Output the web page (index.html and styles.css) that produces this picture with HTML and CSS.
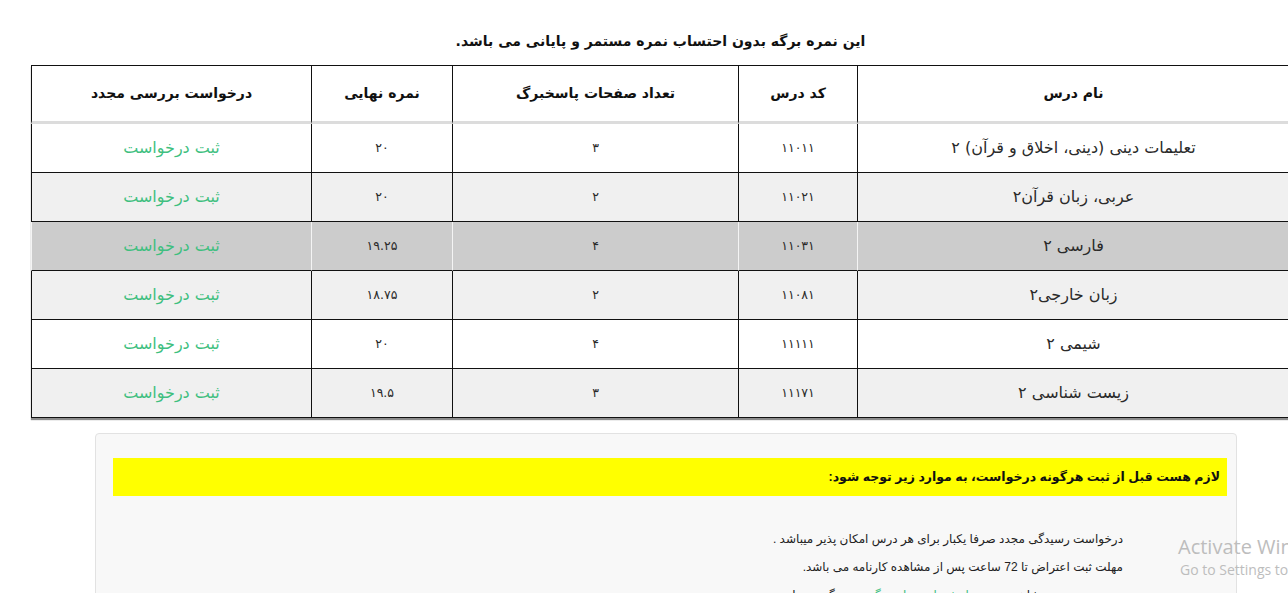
FILE: index.html
```html
<!DOCTYPE html>
<html lang="fa" dir="rtl">
<head>
<meta charset="utf-8">
<title>کارنامه</title>
<link rel="stylesheet" href="styles.css">
</head>
<body>
<div class="page">
  <div class="report">
    <h1 class="caption">این نمره برگه بدون احتساب نمره مستمر و پایانی می باشد.</h1>
    <table class="grades">
      <thead>
        <tr>
          <th class="c-name">نام درس</th>
          <th class="c-code">کد درس</th>
          <th class="c-pages">تعداد صفحات پاسخبرگ</th>
          <th class="c-grade">نمره نهایی</th>
          <th class="c-req">درخواست بررسی مجدد</th>
        </tr>
      </thead>
      <tbody>
        <tr>
          <td class="name">تعلیمات دینی (دینی، اخلاق و قرآن) ۲</td>
          <td class="num">۱۱۰۱۱</td>
          <td class="num">۳</td>
          <td class="num">۲۰</td>
          <td><a class="req" href="#">ثبت درخواست</a></td>
        </tr>
        <tr class="alt">
          <td class="name">عربی، زبان قرآن۲</td>
          <td class="num">۱۱۰۲۱</td>
          <td class="num">۲</td>
          <td class="num">۲۰</td>
          <td><a class="req" href="#">ثبت درخواست</a></td>
        </tr>
        <tr class="hover">
          <td class="name">فارسی ۲</td>
          <td class="num">۱۱۰۳۱</td>
          <td class="num">۴</td>
          <td class="num">۱۹.۲۵</td>
          <td><a class="req" href="#">ثبت درخواست</a></td>
        </tr>
        <tr class="alt">
          <td class="name">زبان خارجی۲</td>
          <td class="num">۱۱۰۸۱</td>
          <td class="num">۲</td>
          <td class="num">۱۸.۷۵</td>
          <td><a class="req" href="#">ثبت درخواست</a></td>
        </tr>
        <tr>
          <td class="name">شیمی ۲</td>
          <td class="num">۱۱۱۱۱</td>
          <td class="num">۴</td>
          <td class="num">۲۰</td>
          <td><a class="req" href="#">ثبت درخواست</a></td>
        </tr>
        <tr class="alt">
          <td class="name">زیست شناسی ۲</td>
          <td class="num">۱۱۱۷۱</td>
          <td class="num">۳</td>
          <td class="num">۱۹.۵</td>
          <td><a class="req" href="#">ثبت درخواست</a></td>
        </tr>
      </tbody>
    </table>
  </div>

  <div class="notice">
    <div class="notice-head">لازم هست قبل از ثبت هرگونه درخواست، به موارد زیر توجه شود:</div>
    <ul class="notice-list">
      <li>درخواست رسیدگی مجدد صرفا یکبار برای هر درس امکان پذیر میباشد .</li>
      <li>مهلت ثبت اعتراض تا 72 ساعت پس از مشاهده کارنامه می باشد.</li>
      <li>در صورت عدم مشاهده نتیجه، <span class="hl">با پشتیبانی تماس بگیرید</span> و پیگیری نمایید.</li>
    </ul>
  </div>
</div>

<div class="activate" dir="ltr">
  <div class="act-title">Activate Windows</div>
  <div class="act-sub">Go to Settings to activate Windows.</div>
</div>
</body>
</html>
```

FILE: styles.css
```css
html, body {
  margin: 0;
  padding: 0;
  overflow: hidden;
  background: #ffffff;
}

body {
  font-family: "DejaVu Sans", "Noto Sans", sans-serif;
  color: #222222;
  width: 1288px;
  height: 593px;
  position: relative;
}

.page {
  width: 1288px;
  height: 593px;
  overflow: hidden;
}

.report {
  margin: 0 -2px 0 31px;
}

.caption {
  margin: 0;
  height: 65px;
  box-sizing: border-box;
  padding-top: 31px;
  font-size: 14px;
  line-height: 20px;
  font-weight: bold;
  text-align: center;
  color: #111111;
}

.grades {
  width: 1259px;
  table-layout: fixed;
  border-collapse: separate;
  border-spacing: 0;
  border-top: 1px solid #111111;
  box-shadow: 0 2px 1px #8c8c8c;
  font-size: 15px;
}

.grades th,
.grades td {
  box-sizing: border-box;
  text-align: center;
  vertical-align: middle;
  border-left: 1px solid #111111;
  border-bottom: 1px solid #111111;
  padding: 0 8px;
  line-height: 20px;
  white-space: nowrap;
}

.grades th {
  height: 58px;
  padding-bottom: 2px;
  font-size: 14px;
  font-weight: bold;
  color: #111111;
  border-bottom: 3px solid #dcdcdc;
  background: #ffffff;
}

.grades td {
  height: 49px;
  background: #ffffff;
  color: #2a2a2a;
}

.grades th:first-child,
.grades td:first-child {
  border-right: 1px solid #111111;
}

.c-name { width: 433px; }
.c-code { width: 119px; }
.c-pages { width: 286px; }
.c-grade { width: 141px; }
.c-req { width: 280px; }

.grades td.name {
  font-size: 16px;
}

.grades td.num {
  font-size: 12.5px;
}

.grades tr.alt td {
  background: #f0f0f0;
}

.grades tr.hover td {
  background: #cccccc;
  border-left-color: #f4f4f4;
}

.grades tr.hover td:first-child {
  border-right-color: #f4f4f4;
}

.req {
  color: #3fbf7f;
  text-decoration: none;
  font-size: 16px;
}

.notice {
  margin: 15px 51px 0 95px;
  height: 200px;
  box-sizing: border-box;
  background: #f8f8f8;
  border: 1px solid #e2e2e2;
  border-radius: 4px;
  padding: 24px 9px 0 17px;
  font-family: "Liberation Sans", "DejaVu Sans", sans-serif;
}

.notice-head {
  background: #ffff00;
  height: 38px;
  line-height: 38px;
  padding: 0 7px;
  font-size: 12.5px;
  font-weight: bold;
  color: #111111;
}

.notice-list {
  list-style: none;
  margin: 29px 0 0 0;
  padding: 0 104px 0 0;
  font-size: 12px;
  line-height: 28px;
  color: #222222;
}

.notice-list li {
  margin: 0;
}

.hl {
  color: #3fbf7f;
}

.activate {
  position: absolute;
  left: 1178px;
  top: 533px;
  white-space: nowrap;
  color: #bdbdbd;
  font-family: "Open Sans", "Noto Sans", sans-serif;
}

.act-title {
  font-size: 20px;
  line-height: 28px;
}

.act-sub {
  font-size: 14px;
  line-height: 18px;
  padding-left: 2px;
}
```
